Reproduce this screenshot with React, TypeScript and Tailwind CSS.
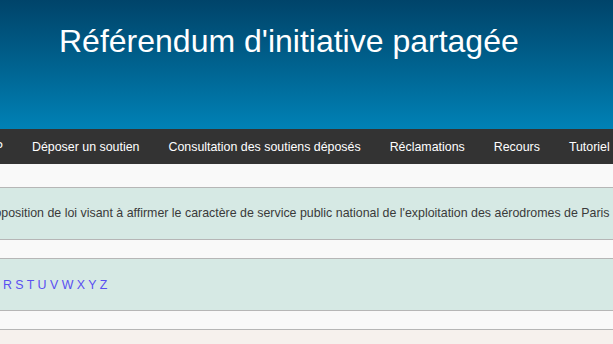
import React from "react";

const navItems = [
  "Déposer un soutien",
  "Consultation des soutiens déposés",
  "Réclamations",
  "Recours",
  "Tutoriel",
];

const letters = "ABCDEFGHIJKLMNOPQRSTUVWXYZ".split("");

const App = () => {
  return (
    <div className="min-h-screen w-full overflow-hidden bg-[#f9f9f9] font-['Liberation_Sans',Arial,sans-serif]">
      <header className="h-[129px] bg-gradient-to-b from-[#00446a] to-[#0082b6] pl-[59px] pt-[25px]">
        <h1 className="text-[32px] leading-[32px] text-white">
          Référendum d'initiative partagée
        </h1>
      </header>

      <nav className="flex h-[35px] items-center gap-[29px] whitespace-nowrap bg-[#333333] pt-px text-[12.4px] text-white">
        <span className="-ml-[37px] w-[40px] text-right">RIP</span>
        {navItems.map((item) => (
          <a key={item} href="#" className="shrink-0">
            {item}
          </a>
        ))}
      </nav>

      <div className="pt-[23px]">
        <div className="flex h-[53px] items-center overflow-hidden whitespace-nowrap border-y border-[#b6b6b6] bg-[#d6e9e4] text-[12.4px] text-[#3a3a3a]">
          <p className="-ml-[18px]">
            Proposition de loi visant à affirmer le caractère de service public
            national de l'exploitation des aérodromes de Paris
          </p>
        </div>

        <div className="mt-[18px] flex h-[53px] items-center overflow-hidden whitespace-nowrap border-y border-[#b6b6b6] bg-[#d6e9e4] pt-[2px] text-[12.4px]">
          <div className="-ml-[195px] shrink-0">
            {letters.map((l, i) => (
              <React.Fragment key={l}>
                <a href="#" className="text-[#5a4ff2]">
                  {l}
                </a>
                {i < letters.length - 1 ? " " : ""}
              </React.Fragment>
            ))}
          </div>
        </div>

        <div className="mt-[18px] h-[20px] border-t border-[#b6b6b6] bg-[#f6f1ed]" />
      </div>
    </div>
  );
};

export default App;
